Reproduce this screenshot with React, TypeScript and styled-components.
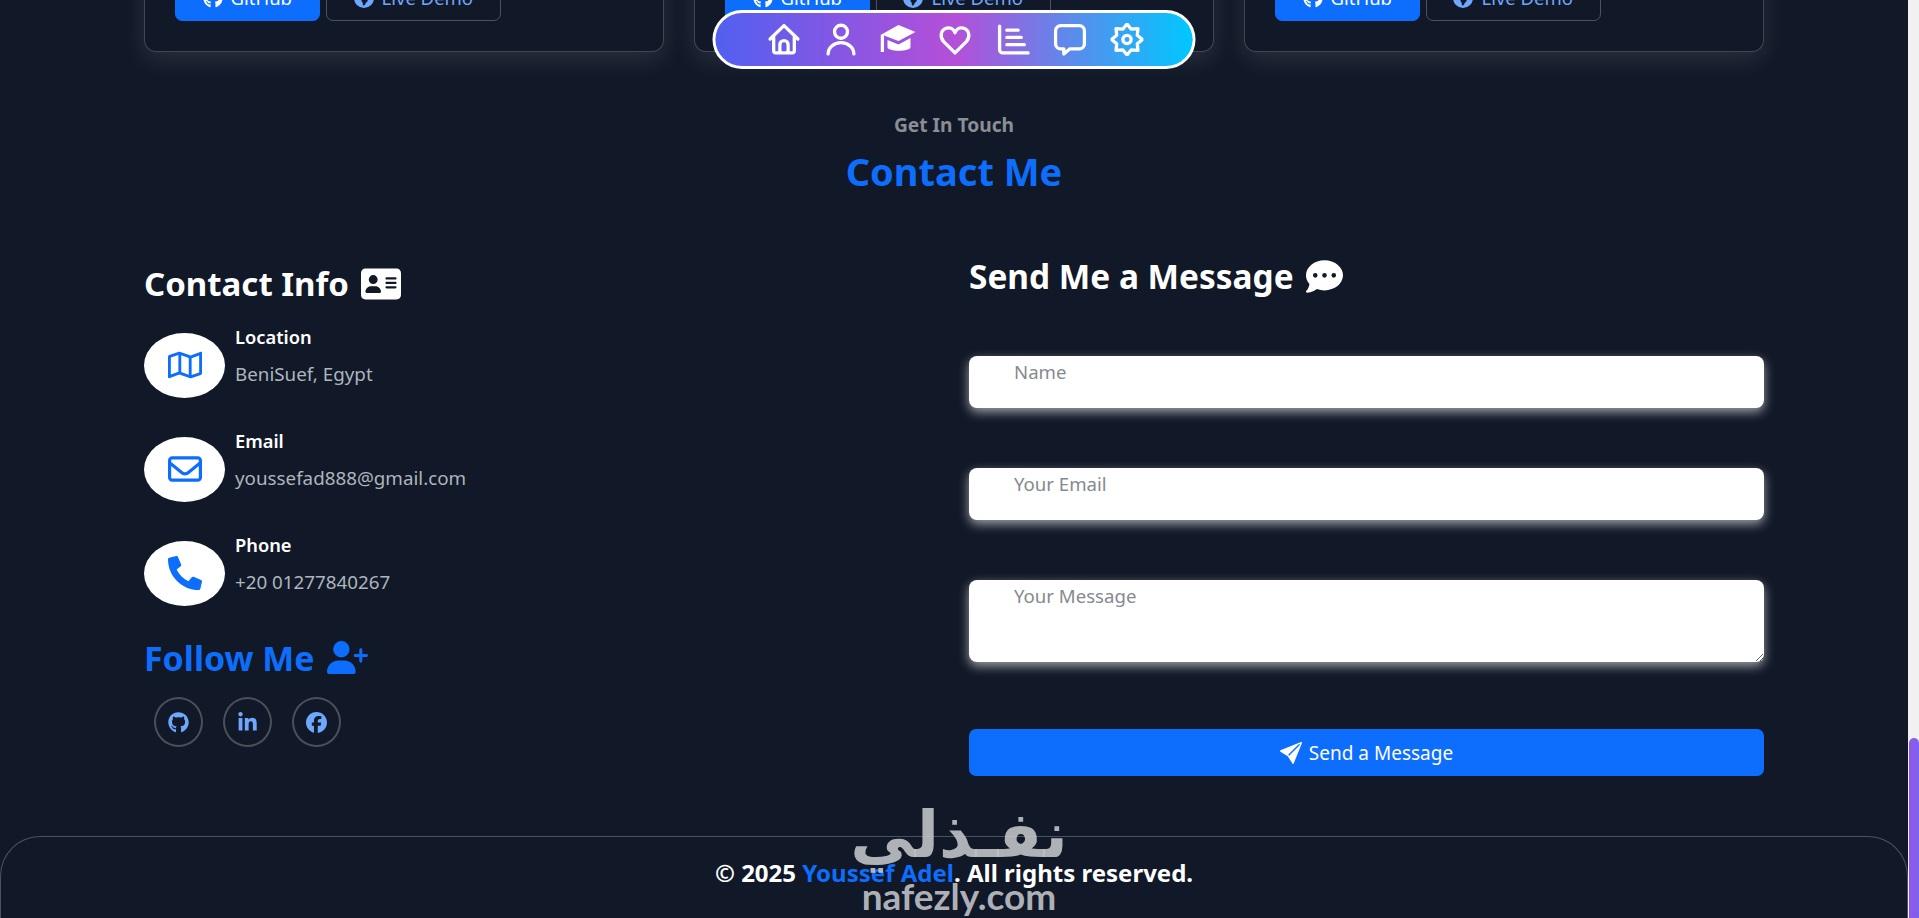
import React from "react";
import styled, { createGlobalStyle } from "styled-components";
import {
  FaAddressCard, FaCommentDots, FaEarthAmericas, FaFacebook, FaGithub, FaLinkedinIn,
  FaRegEnvelope, FaUserPlus,
} from "react-icons/fa6";
import { FaPhoneAlt, FaRegMap } from "react-icons/fa";
import { BsSendFill } from "react-icons/bs";

const BLUE = "#0d6efd";
const FONT = `"Noto Sans", "Open Sans", sans-serif`;

const Global = createGlobalStyle`
  html, body { margin: 0; padding: 0; height: 100%; overflow: hidden; background: #111827; }
  body { font-family: ${FONT}; color: #fff; }
  * { box-sizing: border-box; }
`;

const Page = styled.div`display: flex; height: 918px; overflow: hidden; background: #111827;`;
const Main = styled.main`position: relative; flex: 1; min-width: 0; display: flex; flex-direction: column; overflow: hidden;`;
const ScrollRail = styled.div`width: 11px; background: #f1f1f1; display: flex; flex-direction: column; justify-content: flex-end;`;
const ScrollThumb = styled.div`height: 180px; margin-left: 1px; border-radius: 6px 6px 0 0; background: linear-gradient(90deg, #9358e6, #7a62f2);`;

const CardRow = styled.section`display: grid; grid-template-columns: repeat(3, 1fr); grid-template-rows: 51.5px; gap: 30.5px; padding: 0 144.3px; align-items: end;`;
const ProjectCard = styled.article`
  height: 120px; padding: 0 29.5px 29.5px; display: flex; align-items: flex-end; gap: 6px;
  border: 1px solid rgba(255,255,255,.2); border-radius: 12px; background: #111827;
  box-shadow: 0 8px 24px rgba(255,255,255,.1);
`;
const CardButton = styled.a<{ $primary?: boolean }>`
  height: 47px; display: flex; align-items: center; justify-content: center; gap: 8px;
  width: ${p => (p.$primary ? "145px" : "175px")};
  border-radius: 7px; font-size: 18.500px;
  color: ${p => (p.$primary ? "#fff" : "#6ea8fe")};
  background: ${p => (p.$primary ? BLUE : "transparent")};
  border: 1px solid ${p => (p.$primary ? BLUE : "rgba(255,255,255,.25)")};
  svg { font-size: 20px; }
`;

const BottomNav = styled.nav`
  position: absolute; top: 10px; left: 50%; transform: translateX(-50%);
  width: 483px; height: 58.5px; padding-left: 3px; display: flex; align-items: center; justify-content: center;
  border: 3px solid #fff; border-radius: 30px;
  background: linear-gradient(90deg, #5160f0 0%, #b54fd8 50%, #00c8ff 100%);
`;
const NavItem = styled.a`width: 57.3px; height: 34px; display: flex; align-items: center; justify-content: center; color: #fff;`;
const NavGlyph = styled.svg`width: 33px; height: 33px; fill: none; stroke: currentColor; stroke-width: 3.2; stroke-linecap: round; stroke-linejoin: round;`;
const CapGlyph = styled.svg`width: 35px; height: 29px; fill: currentColor;`;

const gearPoints = Array.from({ length: 16 }, (_, i) => {
  const a = (Math.PI * i) / 8 - Math.PI / 2;
  const r = i % 2 === 0 ? 15 : 10.8;
  return `${(16 + r * Math.cos(a)).toFixed(2)},${(16 + r * Math.sin(a)).toFixed(2)}`;
}).join(" ");

const Contact = styled.section`padding: 0 144px; display: flex; flex-direction: column;`;
const Eyebrow = styled.p`margin: 61.5px 0 0; text-align: center; font-size: 19.200px; line-height: 24px; font-weight: 700; color: #8a8e95;`;
const Title = styled.h2`margin: 10px 0 0; text-align: center; font-size: 38px; line-height: 48px; font-weight: 700; color: ${BLUE};`;
const Columns = styled.div`margin-top: 61px; display: grid; grid-template-columns: 1fr 795px;`;
const InfoColumn = styled.div`padding-top: 8px; display: flex; flex-direction: column;`;
const Heading = styled.h3<{ $icon: number; $size: number }>`
  margin: 0 0 2px; display: flex; align-items: center; gap: 12px;
  font-size: ${p => p.$size}px; line-height: 40px; font-weight: 700; color: #fff;
  svg { font-size: ${p => p.$icon}px; }
`;
const InfoList = styled.div`margin-top: 19px; display: flex; flex-direction: column; gap: 24px;`;
const InfoItem = styled.div`display: flex; align-items: center; gap: 10px;`;
const InfoIcon = styled.span`width: 81px; height: 65px; flex: none; border-radius: 50%; background: #fff; color: ${BLUE}; display: flex; align-items: center; justify-content: center; font-size: 34px;`;
const InfoText = styled.div`display: flex; flex-direction: column;`;
const InfoLabel = styled.strong`font-size: 18.300px; line-height: 24px; font-weight: 600; margin-bottom: 13px;`;
const InfoValue = styled.span`font-size: 18.800px; line-height: 24px; color: #adb5bd; margin-bottom: 19px;`;
const FollowHeading = styled.h3`
  margin: 24px 0 0; display: flex; align-items: center; gap: 12px;
  font-size: 33.900px; line-height: 38px; font-weight: 700; color: ${BLUE};
  svg { font-size: 41px; }
`;
const Socials = styled.div`margin-top: 19px; padding-left: 10px; display: flex; gap: 20px;`;
const SocialLink = styled.a`width: 49px; height: 50px; border-radius: 50%; border: 2px solid #4b4f58; color: #6ea8fe; display: flex; align-items: center; justify-content: center; font-size: 21px;`;

const MessageForm = styled.form`display: flex; flex-direction: column;`;
const fieldCss = `
  display: block; width: 100%; border: none; border-radius: 8px; background: #fff; outline: none;
  box-shadow: 0 4px 11px rgba(255,255,255,.6); font-family: ${FONT}; font-size: 18.600px; color: #212529;
  &::placeholder { color: #858a90; opacity: 1; }
`;
const TextField = styled.input`${fieldCss} height: 51.5px; padding: 0 45px 20px; margin-top: 60.5px; &:first-of-type { margin-top: 58px; }`;
const MessageField = styled.textarea`${fieldCss} height: 82px; padding: 3px 45px 0; margin-top: 60.5px; line-height: 26px; resize: vertical;`;
const SendButton = styled.button`
  margin-top: 67px; height: 47px; border: none; border-radius: 7px; background: ${BLUE}; color: #fff;
  font-family: ${FONT}; font-size: 19px; display: flex; align-items: center; justify-content: center; gap: 7px;
  svg { font-size: 22px; }
`;

const Footer = styled.footer`
  margin-top: 60px; flex: 1; padding-top: 20px; text-align: center;
  border: 1px solid rgba(255,255,255,.25); border-bottom: none; border-radius: 40px 40px 0 0;
  font-size: 24px; line-height: 32px; font-weight: 700; color: #fff;
`;
const Accent = styled.span`color: ${BLUE};`;

const Watermark = styled.div`
  position: absolute; left: 853px; top: 790px; width: 212px; height: 128px; pointer-events: none;
  display: flex; flex-direction: column; align-items: center; color: rgba(196,199,204,.88);
`;
const WatermarkArabic = styled.span`font-family: "DejaVu Sans", sans-serif; font-weight: 700; font-size: 64px; line-height: 90px; direction: rtl; white-space: nowrap;`;
const WatermarkLatin = styled.span`margin-top: -2px; font-family: Lato, sans-serif; font-weight: 700; font-size: 37px; line-height: 36px; white-space: nowrap;`;

function Card() {
  return (
    <ProjectCard>
      <CardButton $primary><FaGithub />GitHub</CardButton>
      <CardButton><FaEarthAmericas />Live Demo</CardButton>
    </ProjectCard>
  );
}

export default function App() {
  return (
    <Page>
      <Global />
      <Main>
        <CardRow><Card /><Card /><Card /></CardRow>
        <BottomNav>
          <NavItem><NavGlyph viewBox="0 0 32 32"><path d="M2.5 15.5 16 2.5l13.5 13M6 13v14a2 2 0 0 0 2 2h16a2 2 0 0 0 2-2V13M12 29v-8a4 4 0 0 1 8 0v8" /></NavGlyph></NavItem>
          <NavItem><NavGlyph viewBox="0 0 32 32"><circle cx="16" cy="8.5" r="6.3" /><path d="M3.5 30a12.5 11 0 0 1 25 0" /></NavGlyph></NavItem>
          <NavItem><CapGlyph viewBox="0 0 35 29"><path d="M18 0 35 7 18 16 3.500 10.500V27H0V10Z" /><path d="M7 15 18 19.500 30 13v9c0 5-23 5-23 0Z" /></CapGlyph></NavItem>
          <NavItem><NavGlyph viewBox="0 0 32 32"><path d="M16 29 5 18C1 13.500 2 6.500 8 5c4-1 7 1.500 8 4.500C17 6.500 20 4 24 5c6 1.500 7 8.500 3 13Z" /></NavGlyph></NavItem>
          <NavItem><NavGlyph viewBox="0 0 32 32"><path d="M3 3v23a3 3 0 0 0 3 3h25M10 7h11M10 14h14M10 21h17" /></NavGlyph></NavItem>
          <NavItem><NavGlyph viewBox="0 0 32 32"><path d="M7 2.500h18a5 5 0 0 1 5 5V20a5 5 0 0 1-5 5H16l-6 5v-5H7a5 5 0 0 1-5-5V7.500a5 5 0 0 1 5-5Z" /></NavGlyph></NavItem>
          <NavItem><NavGlyph viewBox="0 0 32 32"><polygon points={gearPoints} /><circle cx="16" cy="16" r="4" /></NavGlyph></NavItem>
        </BottomNav>
        <Contact>
          <Eyebrow>Get In Touch</Eyebrow>
          <Title>Contact Me</Title>
          <Columns>
            <InfoColumn>
              <Heading $icon={40} $size={33}>Contact Info <FaAddressCard /></Heading>
              <InfoList>
                <InfoItem><InfoIcon><FaRegMap /></InfoIcon><InfoText><InfoLabel>Location</InfoLabel><InfoValue>BeniSuef, Egypt</InfoValue></InfoText></InfoItem>
                <InfoItem><InfoIcon><FaRegEnvelope /></InfoIcon><InfoText><InfoLabel>Email</InfoLabel><InfoValue>youssefad888@gmail.com</InfoValue></InfoText></InfoItem>
                <InfoItem><InfoIcon><FaPhoneAlt /></InfoIcon><InfoText><InfoLabel>Phone</InfoLabel><InfoValue>+20 01277840267</InfoValue></InfoText></InfoItem>
              </InfoList>
              <FollowHeading>Follow Me <FaUserPlus /></FollowHeading>
              <Socials>
                <SocialLink><FaGithub /></SocialLink>
                <SocialLink><FaLinkedinIn /></SocialLink>
                <SocialLink><FaFacebook /></SocialLink>
              </Socials>
            </InfoColumn>
            <MessageForm>
              <Heading $icon={37} $size={33.4}>Send Me a Message <FaCommentDots /></Heading>
              <TextField placeholder="Name" />
              <TextField placeholder="Your Email" />
              <MessageField placeholder="Your Message" />
              <SendButton type="button"><BsSendFill />Send a Message</SendButton>
            </MessageForm>
          </Columns>
        </Contact>
        <Footer>© 2025 <Accent>Youssef Adel</Accent>. All rights reserved.</Footer>
        <Watermark>
          <WatermarkArabic>نفـذلي</WatermarkArabic>
          <WatermarkLatin>nafezly.com</WatermarkLatin>
        </Watermark>
      </Main>
      <ScrollRail><ScrollThumb /></ScrollRail>
    </Page>
  );
}
